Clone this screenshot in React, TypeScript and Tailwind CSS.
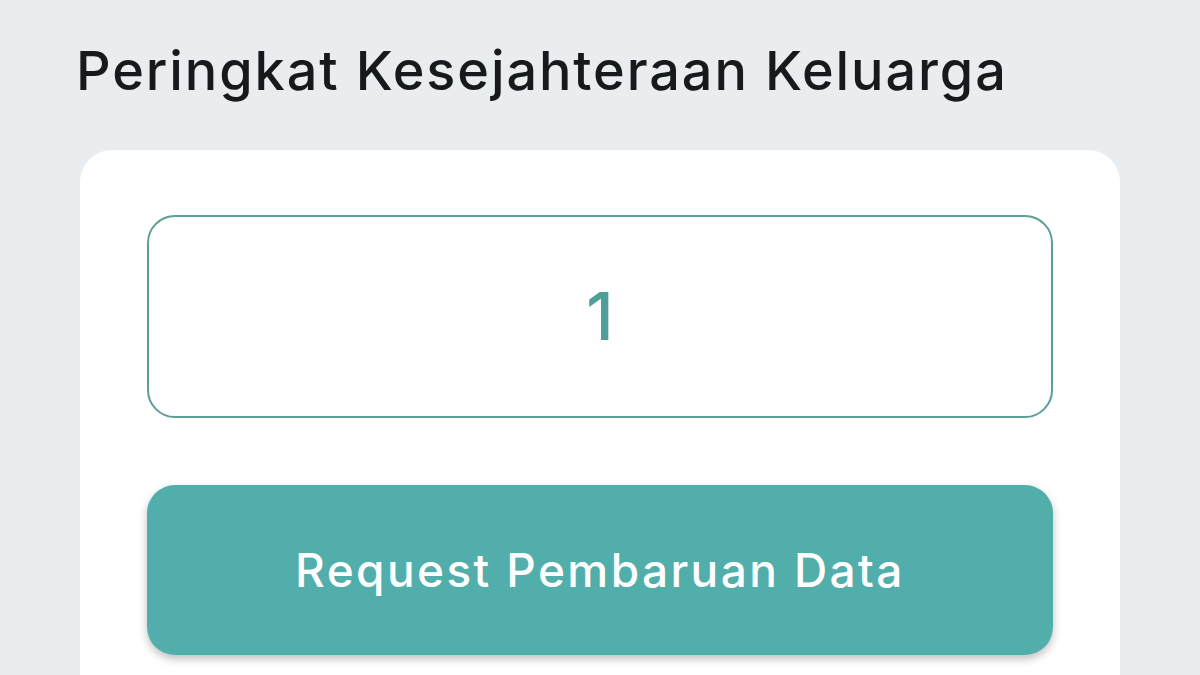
export default function App() {
  return (
    <div className="w-[1200px] h-[675px] overflow-hidden bg-[#e9edf0] font-['Inter','Noto_Sans',sans-serif]">
      <div className="pt-[39px] pl-[76px]">
        <h1 className="text-[54px] leading-[64px] font-medium text-[#161a1d] tracking-[1.9px]">
          Peringkat Kesejahteraan Keluarga
        </h1>
      </div>
      <div className="mt-[47px] ml-[80px] w-[1040px] h-[600px] bg-white rounded-[32px] px-[67px] pt-[65px]">
        <div className="h-[203px] rounded-[28px] border-2 border-[#5c9f96] flex items-center justify-center">
          <span className="text-[66px] font-medium text-[#4f9e97]">1</span>
        </div>
        <button className="mt-[67px] w-full h-[170px] rounded-[28px] bg-[#52aeaa] shadow-[0_4px_8px_rgba(0,0,0,0.25)] flex items-center justify-center">
          <span className="text-[46px] font-medium text-white tracking-[2.4px]">Request Pembaruan Data</span>
        </button>
      </div>
    </div>
  );
}
